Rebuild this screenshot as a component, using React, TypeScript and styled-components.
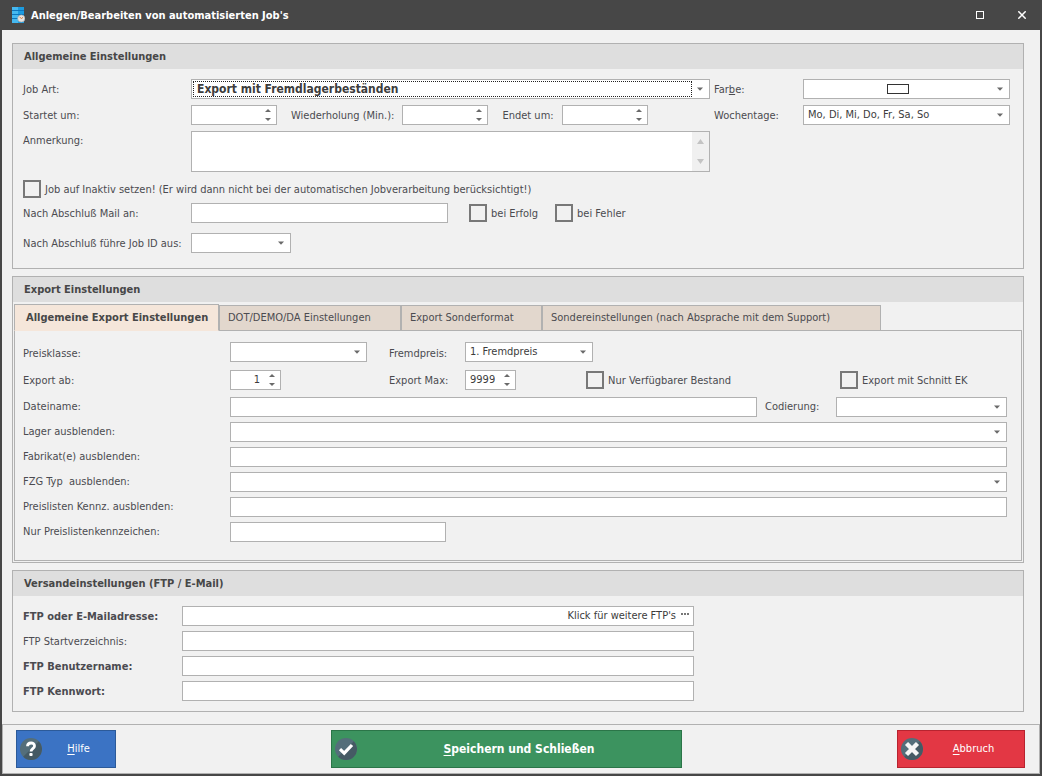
import React from "react";
import styled, { createGlobalStyle, css } from "styled-components";

const color = {
  frame: "#474747",
  surface: "#f1f1f1",
  header: "#dedede",
  line: "#b1b1b1",
  text: "#4b4b50",
  strong: "#474747",
  tab: "#e2d7cd",
  tabActive: "#f5e6da",
  arrow: "#6a6a6a",
  box: "#787878",
};

const GlobalStyle = createGlobalStyle`
  * { box-sizing: border-box; }
  body {
    margin: 0;
    background: ${color.surface};
    color: ${color.text};
    font-family: "DejaVu Sans Condensed", "DejaVu Sans", Tahoma, sans-serif;
    font-size: 11px;
    line-height: 16px;
  }
  button, input, select, textarea { font: inherit; color: inherit; margin: 0; }
`;

const Window = styled.div`
  display: flex;
  flex-direction: column;
  min-height: 100vh;
  border: solid ${color.frame};
  border-width: 0 2px 2px;
`;

const TitleBar = styled.header`
  display: flex;
  align-items: center;
  gap: 6px;
  height: 30px;
  padding-left: 10px;
  background: ${color.frame};
  color: #fff;
`;

const Title = styled.h1`
  flex: 1;
  margin: 0;
  padding-top: 2px;
  font-size: 11px;
  line-height: 16px;
  font-weight: bold;
`;

const CaptionButton = styled.button`
  display: grid;
  place-items: center;
  width: 36px;
  height: 30px;
  padding: 0;
  border: 0;
  background: none;
  color: #fff;
`;

const Content = styled.main`
  flex: 1;
  display: flex;
  flex-direction: column;
  gap: 7px;
  padding: 13px 16px 11px 10px;
`;

const Panel = styled.section`
  border: 1px solid ${color.line};
`;

const PanelTitle = styled.h2`
  margin: 0;
  height: 25px;
  padding-left: 11px;
  background: ${color.header};
  color: ${color.strong};
  font-size: 11px;
  line-height: 26px;
  font-weight: bold;
`;

const PanelBody = styled.div`
  display: flex;
  flex-direction: column;
  gap: 5px;
  padding: 10px 13px 10px 10px;
`;

const Row = styled.div<{ $cols: string; $align?: string }>`
  display: grid;
  grid-template-columns: ${(p) => p.$cols};
  align-items: ${(p) => p.$align ?? "center"};
`;

const NextJobRow = styled(Row)`
  padding: 5px 0;
`;

const JobGrid = styled.div`
  display: grid;
  grid-template-columns: 168px minmax(0, 1fr) 93px 207px;
  row-gap: 6px;
  align-items: center;
  padding-bottom: 3px;
`;

const Times = styled.div`
  display: flex;
  align-items: center;
  gap: 14px;
`;

const Pair = styled.div`
  display: flex;
  align-items: center;
  gap: 8px;
`;

const Label = styled.label<{ $bold?: boolean; $top?: boolean; $indent?: number }>`
  padding-top: 2px;
  padding-left: ${(p) => p.$indent ?? 0}px;
  white-space: nowrap;
  font-weight: ${(p) => (p.$bold ? "bold" : "normal")};
  align-self: ${(p) => (p.$top ? "start" : "auto")};
`;

const fieldBox = css`
  height: 20px;
  border: 1px solid ${color.line};
  border-radius: 0;
  background: #fff;
  outline: none;
`;

const TextField = styled.input<{ $width?: number }>`
  ${fieldBox}
  width: ${(p) => (p.$width ? p.$width + "px" : "100%")};
  padding: 0 4px;
`;

const DropBox = styled.div<{ $width?: number }>`
  ${fieldBox}
  display: grid;
  grid-template-columns: minmax(0, 1fr) 18px;
  align-items: center;
  width: ${(p) => (p.$width ? p.$width + "px" : "100%")};
`;

const NativeSelect = styled.select<{ $focus?: boolean }>`
  grid-area: 1 / 1 / 2 / 3;
  appearance: none;
  width: 100%;
  height: 18px;
  padding: 0 17px 0 4px;
  border: 0;
  border-radius: 0;
  background: transparent;
  color: #3c3c3c;
  outline: none;
  ${(p) =>
    p.$focus &&
    css`
      width: calc(100% - 18px);
      height: 16px;
      margin: 1px;
      padding: 0 3px;
      border: 1px dotted #222;
      font-size: 12px;
      line-height: 14px;
      font-weight: bold;
    `}
`;

const DropArrow = styled.svg`
  grid-area: 1 / 2;
  justify-self: center;
  pointer-events: none;
`;

const Swatch = styled.span`
  grid-area: 1 / 1;
  justify-self: center;
  width: 22px;
  height: 10px;
  border: 1px solid #333;
  background: #fff;
  pointer-events: none;
`;

const SpinBox = styled.div<{ $width: number }>`
  ${fieldBox}
  display: flex;
  width: ${(p) => p.$width}px;
`;

const SpinInput = styled.input`
  flex: 1;
  min-width: 0;
  padding: 0 4px;
  border: 0;
  background: none;
  color: #3c3c3c;
  text-align: right;
  outline: none;
`;

const SpinButtons = styled.div`
  display: flex;
  flex-direction: column;
  width: 16px;
`;

const SpinButton = styled.button`
  flex: 1;
  display: grid;
  place-items: center;
  min-height: 0;
  padding: 0;
  border: 0;
  background: none;
`;

const MemoBox = styled.div`
  display: flex;
  height: 41px;
  border: 1px solid ${color.line};
  background: #fff;
`;

const MemoText = styled.textarea`
  flex: 1;
  min-width: 0;
  padding: 2px 4px;
  border: 0;
  background: none;
  resize: none;
  outline: none;
  overflow: hidden;
`;

const MemoScroll = styled.div`
  display: flex;
  flex-direction: column;
  width: 17px;
  background: #f0f0f0;
`;

const CheckLabel = styled.label`
  display: flex;
  align-items: center;
  gap: 4px;
  white-space: nowrap;
`;

const CheckText = styled.span`
  padding-top: 2px;
`;

const CheckBox = styled.input`
  appearance: none;
  width: 18px;
  height: 18px;
  border: 2px solid ${color.box};
  background: transparent;
  &:checked { background: ${color.box}; }
`;

const Tabs = styled.div`
  display: flex;
  align-items: flex-end;
  height: 27px;
  margin: 2px 1px 0;
`;

const Tab = styled.button<{ $active?: boolean; $width: number }>`
  width: ${(p) => p.$width}px;
  height: 26px;
  padding: 0 0 0 9px;
  border: 1px solid ${color.line};
  border-left-width: ${(p) => (p.$active ? "1px" : "0")};
  background: ${color.tab};
  text-align: left;
  white-space: nowrap;
  & + & { box-shadow: inset 1px 0 ${color.line}; }
  ${(p) =>
    p.$active &&
    css`
      height: 27px;
      padding-left: 11px;
      border-bottom-color: ${color.tabActive};
      background: ${color.tabActive};
      color: ${color.strong};
      font-weight: bold;
    `}
`;

const TabPanel = styled.div`
  display: flex;
  flex-direction: column;
  gap: 5px;
  margin: -1px 1px 1px;
  padding: 11px 14px 18px 8px;
  border: 1px solid ${color.line};
`;

const PriceRows = styled.div`
  display: flex;
  flex-direction: column;
  gap: 8px;
  padding-bottom: 2px;
`;

const LinkField = styled.div`
  ${fieldBox}
  display: flex;
`;

const BareInput = styled.input`
  flex: 1;
  min-width: 0;
  padding: 0 4px;
  border: 0;
  background: none;
  outline: none;
`;

const LinkButton = styled.button`
  display: flex;
  align-items: center;
  gap: 5px;
  padding: 0 4px;
  border: 0;
  background: none;
  color: #3c3c3c;
  white-space: nowrap;
`;

const Footer = styled.footer`
  display: flex;
  justify-content: space-between;
  padding: 5px 14px 5px 13px;
  border: 1px solid ${color.line};
`;

const ActionButton = styled.button<{ $bg: string; $edge: string; $width: number; $strong?: boolean }>`
  display: flex;
  align-items: center;
  width: ${(p) => p.$width}px;
  height: 38px;
  padding: 0 0 0 3px;
  border: 1px solid ${(p) => p.$edge};
  background: ${(p) => p.$bg};
  color: #fff;
  font-size: ${(p) => (p.$strong ? "12px" : "11px")};
  font-weight: ${(p) => (p.$strong ? "bold" : "normal")};
  u { text-underline-offset: 2px; }
`;

const ActionText = styled.span`
  flex: 1;
  text-align: center;
`;

function Triangle({ up = false, fill = color.arrow, large = false }: { up?: boolean; fill?: string; large?: boolean }) {
  const w = large ? 7 : 6;
  const h = large ? 5 : 3;
  return (
    <svg width={w} height={h} viewBox={`0 0 ${w} ${h}`} aria-hidden="true">
      <path d={up ? `M0 ${h}H${w}L${w / 2} 0Z` : `M0 0H${w}L${w / 2} ${h}Z`} fill={fill} />
    </svg>
  );
}

type DropProps = { id: string; value?: string; width?: number; focus?: boolean; swatch?: boolean };

function Drop({ id, value = "", width, focus, swatch }: DropProps) {
  return (
    <DropBox $width={width}>
      <NativeSelect id={id} $focus={focus} defaultValue={value}>
        <option value={value}>{value}</option>
      </NativeSelect>
      {swatch && <Swatch />}
      <DropArrow width="6" height="4" viewBox="0 0 6 4" aria-hidden="true">
        <path d="M0 .5H6L3 3.800Z" fill={color.arrow} />
      </DropArrow>
    </DropBox>
  );
}

function Spin({ id, value = "", width }: { id: string; value?: string; width: number }) {
  return (
    <SpinBox $width={width}>
      <SpinInput id={id} inputMode="numeric" defaultValue={value} />
      <SpinButtons>
        <SpinButton type="button" aria-label="Erhöhen"><Triangle up /></SpinButton>
        <SpinButton type="button" aria-label="Verringern"><Triangle /></SpinButton>
      </SpinButtons>
    </SpinBox>
  );
}

function Check({ children }: { children: React.ReactNode }) {
  return (
    <CheckLabel>
      <CheckBox type="checkbox" />
      <CheckText>{children}</CheckText>
    </CheckLabel>
  );
}

function AppIcon() {
  return (
    <svg width="13" height="16" viewBox="0 0 13 16" aria-hidden="true">
      <rect width="12" height="16" fill="#1c9be0" />
      <path d="M0 0H6V16H0Z" fill="#45b8f0" />
      <path d="M0 3.500H12M0 7.500H12M0 11.500H12" stroke="#0d76bd" />
      <circle cx="9.300" cy="11.500" r="3.600" fill="#e8e4e0" stroke="#aaa8a8" strokeWidth=".6" />
      <path d="M7.600 9.800L9.300 11.700L11 10.300" fill="none" stroke="#d77a3c" />
    </svg>
  );
}

function RoundIcon({ kind }: { kind: "help" | "check" | "cross" }) {
  return (
    <svg width="22" height="24" viewBox="0 0 22 24" aria-hidden="true">
      <circle cx="11" cy="12" r="11" fill="#546e7a" />
      <path d="M18.800 4.200A11 11 0 0 1 3.200 19.800Z" fill="#455a64" />
      {kind === "help" && (
        <>
          <path d="M7.500 9.200C7.700 5 14.500 5 14.500 8.900C14.500 11.600 11 11.500 11 14.400" fill="none" stroke="#fff" strokeWidth="2.800" />
          <rect x="9.400" y="16" width="3.200" height="3" rx="1" fill="#fff" />
        </>
      )}
      {kind === "check" && <path d="M5 12.200L9.200 16.200L17 8" fill="none" stroke="#fff" strokeWidth="3.200" />}
      {kind === "cross" && <path d="M5.500 6.500L16.500 17.500M16.500 6.500L5.500 17.500" stroke="#f5f5f5" strokeWidth="4.400" />}
    </svg>
  );
}

const dataCols = "207px minmax(0, 1fr)";
const mailCols = "159px minmax(0, 512px)";

export default function App() {
  return (
    <Window>
      <GlobalStyle />
      <TitleBar>
        <AppIcon />
        <Title>Anlegen/Bearbeiten von automatisierten Job's</Title>
        <CaptionButton type="button" aria-label="Maximieren">
          <svg width="8" height="8" viewBox="0 0 8 8"><rect x=".5" y=".5" width="7" height="7" fill="none" stroke="#fff" /></svg>
        </CaptionButton>
        <CaptionButton type="button" aria-label="Schließen">
          <svg width="8" height="8" viewBox="0 0 8 8"><path d="M.3 .3L7.700 7.700M7.700 .3L.3 7.700" stroke="#fff" strokeWidth="1.500" /></svg>
        </CaptionButton>
      </TitleBar>

      <Content>
        <Panel>
          <PanelTitle>Allgemeine Einstellungen</PanelTitle>
          <PanelBody>
            <JobGrid>
              <Label htmlFor="jobart">Job Art:</Label>
              <Drop id="jobart" value="Export mit Fremdlagerbeständen" focus />
              <Label htmlFor="farbe" $indent={4}>Far<u>b</u>e:</Label>
              <Drop id="farbe" swatch />

              <Label htmlFor="start">Startet um:</Label>
              <Times>
                <Spin id="start" width={86} />
                <Pair>
                  <Label htmlFor="repeat">Wiederholung (Min.):</Label>
                  <Spin id="repeat" width={86} />
                </Pair>
                <Pair>
                  <Label htmlFor="end">Endet um:</Label>
                  <Spin id="end" width={86} />
                </Pair>
              </Times>
              <Label htmlFor="tage" $indent={4}>Wochentage:</Label>
              <Drop id="tage" value="Mo, Di, Mi, Do, Fr, Sa, So" />

              <Label htmlFor="note" $top>Anmerkung:</Label>
              <MemoBox>
                <MemoText id="note" />
                <MemoScroll>
                  <SpinButton type="button" aria-label="Nach oben"><Triangle up large fill="#c3c3c3" /></SpinButton>
                  <SpinButton type="button" aria-label="Nach unten"><Triangle large fill="#c3c3c3" /></SpinButton>
                </MemoScroll>
              </MemoBox>
            </JobGrid>
            <Check>Job auf Inaktiv setzen! (Er wird dann nicht bei der automatischen Jobverarbeitung berücksichtigt!)</Check>
            <Row $cols="168px 278px 86px 1fr">
              <Label htmlFor="mail">Nach Abschluß Mail an:</Label>
              <TextField id="mail" $width={257} />
              <Check>bei Erfolg</Check>
              <Check>bei Fehler</Check>
            </Row>
            <NextJobRow $cols="168px 1fr">
              <Label htmlFor="next">Nach Abschluß führe Job ID aus:</Label>
              <Drop id="next" width={100} />
            </NextJobRow>
          </PanelBody>
        </Panel>

        <Panel>
          <PanelTitle>Export Einstellungen</PanelTitle>
          <Tabs role="tablist">
            <Tab type="button" role="tab" aria-selected="true" $active $width={205}>Allgemeine Export Einstellungen</Tab>
            <Tab type="button" role="tab" $width={182}>DOT/DEMO/DA Einstellungen</Tab>
            <Tab type="button" role="tab" $width={141}>Export Sonderformat</Tab>
            <Tab type="button" role="tab" $width={339}>Sondereinstellungen (nach Absprache mit dem Support)</Tab>
          </Tabs>
          <TabPanel role="tabpanel">
            <PriceRows>
              <Row $cols="207px 159px 76px 1fr" $align="end">
                <Label htmlFor="klasse">Preisklasse:</Label>
                <Drop id="klasse" width={137} />
                <Label htmlFor="fremd">Fremdpreis:</Label>
                <Drop id="fremd" value="1. Fremdpreis" width={128} />
              </Row>
              <Row $cols="207px 159px 76px 121px minmax(0, 1fr) 167px">
                <Label htmlFor="ab">Export ab:</Label>
                <Spin id="ab" value="1" width={51} />
                <Label htmlFor="max">Export Max:</Label>
                <Spin id="max" value="9999" width={51} />
                <Check>Nur Verfügbarer Bestand</Check>
                <Check>Export mit Schnitt EK</Check>
              </Row>
            </PriceRows>
            <Row $cols="207px minmax(0, 1fr) 79px 171px" $align="start">
              <Label htmlFor="datei">Dateiname:</Label>
              <TextField id="datei" />
              <Label htmlFor="code" $indent={8}>Codierung:</Label>
              <Drop id="code" />
            </Row>
            <Row $cols={dataCols} $align="start">
              <Label htmlFor="lager">Lager ausblenden:</Label>
              <Drop id="lager" />
            </Row>
            <Row $cols={dataCols} $align="start">
              <Label htmlFor="fabrikat">Fabrikat(e) ausblenden:</Label>
              <TextField id="fabrikat" />
            </Row>
            <Row $cols={dataCols} $align="start">
              <Label htmlFor="fzg">FZG Typ&nbsp; ausblenden:</Label>
              <Drop id="fzg" />
            </Row>
            <Row $cols={dataCols} $align="start">
              <Label htmlFor="kennz">Preislisten Kennz. ausblenden:</Label>
              <TextField id="kennz" />
            </Row>
            <Row $cols={dataCols} $align="start">
              <Label htmlFor="nur">Nur Preislistenkennzeichen:</Label>
              <TextField id="nur" $width={216} />
            </Row>
          </TabPanel>
        </Panel>

        <Panel>
          <PanelTitle>Versandeinstellungen (FTP / E-Mail)</PanelTitle>
          <PanelBody>
            <Row $cols={mailCols}>
              <Label htmlFor="ftp" $bold>FTP oder E-Mailadresse:</Label>
              <LinkField>
                <BareInput id="ftp" />
                <LinkButton type="button">
                  Klick für weitere FTP's
                  <svg width="8" height="6" viewBox="0 0 8 6" aria-hidden="true">
                    <path d="M0 0h2v2H0zM3 0h2v2H3zM6 0h2v2H6z" fill="#777" />
                  </svg>
                </LinkButton>
              </LinkField>
            </Row>
            <Row $cols={mailCols}>
              <Label htmlFor="dir">FTP Startverzeichnis:</Label>
              <TextField id="dir" />
            </Row>
            <Row $cols={mailCols}>
              <Label htmlFor="user" $bold>FTP Benutzername:</Label>
              <TextField id="user" />
            </Row>
            <Row $cols={mailCols}>
              <Label htmlFor="pass" $bold>FTP Kennwort:</Label>
              <TextField id="pass" type="password" />
            </Row>
          </PanelBody>
        </Panel>
      </Content>

      <Footer>
        <ActionButton type="button" $bg="#3b73c4" $edge="#2c5a99" $width={100}>
          <RoundIcon kind="help" />
          <ActionText><u>H</u>ilfe</ActionText>
        </ActionButton>
        <ActionButton type="button" $bg="#3c935f" $edge="#2b7548" $width={351} $strong>
          <RoundIcon kind="check" />
          <ActionText><u>S</u>peichern und Schließen</ActionText>
        </ActionButton>
        <ActionButton type="button" $bg="#e33744" $edge="#b8232f" $width={128}>
          <RoundIcon kind="cross" />
          <ActionText><u>A</u>bbruch</ActionText>
        </ActionButton>
      </Footer>
    </Window>
  );
}
